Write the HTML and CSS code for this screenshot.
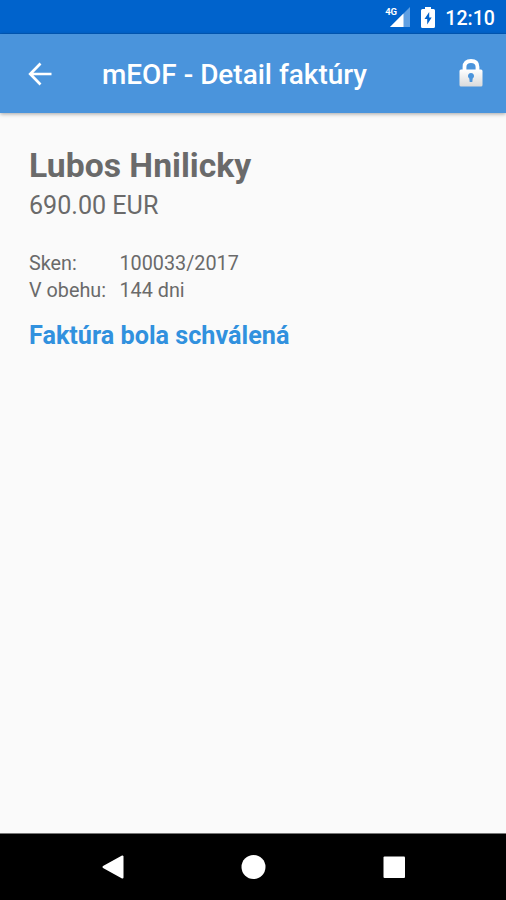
FILE: index.html
```html
<!DOCTYPE html>
<html lang="sk">
<head>
<meta charset="utf-8">
<title>mEOF - Detail faktúry</title>
<link rel="stylesheet" href="styles.css">
</head>
<body>
<div class="status">
  <div class="network">
    <span class="network-type">4G</span>
    <svg class="signal" width="20" height="20" viewBox="0 0 20 20"><path d="M20 0v20H0z" fill="#5f9fe2"/><path d="M13.500 6.500V20H0z" fill="#fff"/></svg>
  </div>
  <svg class="battery" width="14" height="21" viewBox="0 0 14 21"><path d="M4 0h6v2h2.500Q14 2 14 3.500V19.500Q14 21 12.500 21H1.500Q0 21 0 19.500V3.500Q0 2 1.500 2H4z" fill="#fff"/><path d="M8.200 5L3.500 12H6.200V17.500L10.700 10.500H8.200z" fill="#0063cc"/></svg>
  <span class="clock">12:10</span>
</div>
<header class="bar">
  <svg class="back" width="24" height="24" viewBox="0 0 24 24"><path d="M23.500 12H3M12.500 1.500L2.200 12l10.300 10.500" fill="none" stroke="#fff" stroke-width="2.700"/></svg>
  <h1 class="title">mEOF - Detail faktúry</h1>
  <svg class="lock" width="24" height="28" viewBox="0 0 24 28">
    <defs><linearGradient id="metal" x1="0" y1="0" x2="0" y2="1"><stop offset="0" stop-color="#fff"/><stop offset="1" stop-color="#d9dadb"/></linearGradient></defs>
    <path d="M5.500 12V8Q5.500 2 12 2T18.500 8V12" fill="none" stroke="#fff" stroke-width="3.800"/>
    <rect x=".5" y="10.500" width="23" height="17" rx="1.500" fill="url(#metal)"/>
    <path d="M12 14a3 3 0 0 1 1.700 5.500L13.300 23h-2.600L10.300 19.500A3 3 0 0 1 12 14z" fill="#4a94dc"/>
  </svg>
</header>
<main class="content">
  <h2 class="name">Lubos Hnilicky</h2>
  <p class="amount">690.00 EUR</p>
  <dl class="facts"><dt>Sken:</dt><dd>100033/2017</dd><dt>V obehu:</dt><dd>144 dni</dd></dl>
  <p class="state">Faktúra bola schválená</p>
</main>
<nav class="nav">
  <svg width="24" height="24" viewBox="0 0 24 24"><path d="M21.500 1.500V22.500L2.500 12z" fill="#fff" stroke="#fff" stroke-width="2" stroke-linejoin="round"/></svg>
  <svg width="24" height="24" viewBox="0 0 24 24"><circle cx="11.500" cy="12" r="12" fill="#fff"/></svg>
  <svg width="24" height="24" viewBox="0 0 24 24"><rect x="1.500" y="1.500" width="21.500" height="21.500" rx="1" fill="#fff"/></svg>
</nav>
</body>
</html>
```
FILE: styles.css
```css
* { box-sizing: border-box; margin: 0; padding: 0; }
body { width: 506px; height: 900px; display: flex; flex-direction: column; background: #fafafa; font-family: Roboto, sans-serif; color: #6a6a6a; overflow: hidden; }
svg { display: block; flex: none; overflow: visible; }
.status { height: 34px; background: #0063cc; border-bottom: 1px solid #005bbd; display: flex; align-items: center; justify-content: flex-end; padding: 1px 11px 0 0; color: #fff; }
.network { position: relative; margin-right: 11px; }
.network-type { position: absolute; left: -5px; top: 0; font-size: 9.500px; line-height: 9px; font-weight: 700; letter-spacing: -0.3px; }
.battery { margin-right: 10px; }
.clock { font-size: 19.6px; font-weight: 500; padding-top: 2px; }
.bar { height: 79px; background: #4a94dc; display: flex; align-items: center; padding: 0 23px 0 28px; color: #fff; box-shadow: 0 1px 4px rgba(0, 0, 0, .35); }
.title { font-size: 27.95px; font-weight: 500; margin-left: 50px; padding-top: 1px; }
.lock { margin: -2px 0 0 auto; }
.content { flex: 1; padding: 33px 29px; }
.name { font-size: 33.7px; line-height: 40px; font-weight: 700; }
.amount { font-size: 25.1px; line-height: 40px; }
.facts { display: grid; grid-template-columns: 90.500px 1fr; font-size: 19.8px; line-height: 27px; margin-top: 24px; }
.state { font-size: 25.2px; line-height: 32px; font-weight: 700; color: #3191de; margin-top: 16px; }
.nav { height: 67px; background: #000; border-top: 1px solid #777; display: flex; justify-content: space-between; align-items: center; padding: 0 100px 1px 101px; }
```
